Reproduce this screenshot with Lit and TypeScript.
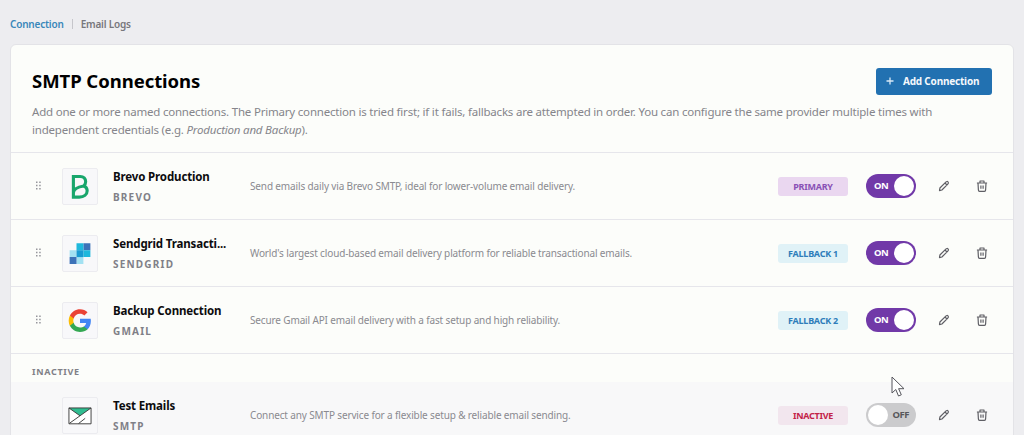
import { LitElement, css, html, svg } from 'lit';
import { customElement, property } from 'lit/decorators.js';
import { classMap } from 'lit/directives/class-map.js';

interface Connection {
  name: string;
  provider: string;
  description: string;
  status: string;
  tone: string;
  active: boolean;
}

const connections: Connection[] = [
  {
    name: 'Brevo Production',
    provider: 'brevo',
    description: 'Send emails daily via Brevo SMTP, ideal for lower-volume email delivery.',
    status: 'Primary',
    tone: 'primary',
    active: true,
  },
  {
    name: 'Sendgrid Transacti...',
    provider: 'sendgrid',
    description: "World's largest cloud-based email delivery platform for reliable transactional emails.",
    status: 'Fallback 1',
    tone: 'fallback',
    active: true,
  },
  {
    name: 'Backup Connection',
    provider: 'gmail',
    description: 'Secure Gmail API email delivery with a fast setup and high reliability.',
    status: 'Fallback 2',
    tone: 'fallback',
    active: true,
  },
  {
    name: 'Test Emails',
    provider: 'smtp',
    description: 'Connect any SMTP service for a flexible setup & reliable email sending.',
    status: 'Inactive',
    tone: 'inactive',
    active: false,
  },
];

// all logos share a 36x36 view box
const logos: Record<string, unknown> = {
  brevo: svg`
    <path d="M11 7.400v21.800h6.200c5 0 8.400-2.700 8.400-6.600 0-2.700-1.400-4.500-3.700-5.200 1.400-1 2.100-2.500 2.100-4.300 0-3.400-2.300-5.700-5.700-5.700z
      M11 24.500c.3-3.800 4.300-6 10.900-7.100" fill="none" stroke="#18a66c" stroke-width="3.300" />`,
  sendgrid: svg`
    <path fill="#a3e1f2" d="M7 14.500h7.300v7.300H7zM14.300 21.800h7.300v7.300h-7.300z" />
    <path fill="#3c72b8" d="M7 21.800h7.300v7.300H7zM21.600 7.200H29v7.300h-7.400z" />
    <path fill="#1fb8dc" d="M14.300 7.200h7.300v7.300h-7.300zM21.600 14.500H29v7.300h-7.400z" />
    <path fill="#199bd2" d="M14.300 14.500h7.300v7.300h-7.300z" />`,
  gmail: svg`
    <g transform="translate(6 6.200)">
      <path fill="#4285f4" d="M23.500 12.300c0-.8-.1-1.600-.2-2.300H12v4.500h6.500c-.3 1.500-1.100 2.700-2.400 3.600v3h3.900c2.200-2.100 3.500-5.200 3.500-8.800z" />
      <path fill="#34a853" d="M12 24c3.200 0 6-1.100 8-2.900l-3.900-3c-1.100.7-2.500 1.200-4.100 1.200-3.100 0-5.800-2.100-6.700-5H1.300v3.100C3.300 21.300 7.300 24 12 24z" />
      <path fill="#fbbc05" d="M5.300 14.300c-.3-.7-.4-1.500-.4-2.300s.1-1.600.4-2.300V6.600h-4C.5 8.200 0 10 0 12s.5 3.800 1.300 5.400z" />
      <path fill="#ea4335" d="M12 4.700c1.800 0 3.300.6 4.600 1.800L20 3.100C18 1.200 15.200 0 12 0 7.300 0 3.300 2.700 1.300 6.600l4 3.100c.9-2.900 3.600-5 6.700-5z" />
    </g>`,
  smtp: svg`
    <path fill="#fff" d="M6.300 10h23.400v16.800H6.300z" />
    <path fill="#2fbd90" d="M6.300 10h23.400L18 18.300z" />
    <path fill="none" stroke="#3c3c3c" d="M6.300 10h23.400v16.800H6.300zM6.300 10 18 18.300 29.700 10M6.800 26.300 18 18.300M16.500 26.500l7-5.500" />`,
};

const pencil = svg`
  <path d="M1.500 10.600 1.900 8 7.800 2.100c.8-.8 1.600-.8 2.200-.2s.6 1.400-.2 2.200L3.900 10zM7 3l2 2" />
`;

const trash = svg`
  <path d="M.9 3h10.200M4 3V1h4v2M2 3l.4 7c0 .7.5 1.300 1.200 1.300h4.800c.7 0 1.200-.6 1.200-1.300L10 3M4.900 5.500v3.200M7.100 5.500v3.200" />
`;

@customElement('state-switch')
export class StateSwitch extends LitElement {
  @property({ type: Boolean }) on = false;

  static styles = css`
    :host {
      display: block;
    }
    .track {
      display: flex;
      align-items: center;
      justify-content: space-between;
      box-sizing: border-box;
      width: 50px;
      height: 24px;
      padding: 2px 2px 2px 8px;
      border-radius: 12px;
      background: #7139a8;
      color: #fff;
      font: 700 9.5px 'Noto Sans', sans-serif;
      letter-spacing: -0.5px;
    }
    .track.off {
      flex-direction: row-reverse;
      padding: 2px 7px 2px 2px;
      background: #cbcbcd;
      color: #57575b;
    }
    .label {
      padding-bottom: 1px;
    }
    .knob {
      width: 20px;
      height: 20px;
      border-radius: 50%;
      background: #fff;
    }
  `;

  render() {
    return html`
      <div class=${classMap({ track: true, off: !this.on })}>
        <span class="label">${this.on ? 'ON' : 'OFF'}</span>
        <span class="knob"></span>
      </div>
    `;
  }
}

@customElement('connection-row')
export class ConnectionRow extends LitElement {
  @property({ attribute: false }) connection!: Connection;

  static styles = css`
    :host {
      display: block;
    }
    .row {
      display: grid;
      grid-template-columns: 28px 51px 137px 1fr 88px 72px 38px 12px;
      align-items: center;
      box-sizing: border-box;
      height: 66px;
      padding: 0 25px 0 23px;
    }
    .inactive {
      background: #f8f8f9;
    }
    .handle {
      width: 8px;
      height: 12px;
      fill: #96969c;
    }
    .logo {
      box-sizing: border-box;
      width: 36px;
      height: 37px;
      border: 1px solid #ececf0;
      border-radius: 2px;
      background: #f8f8fa;
    }
    .logo svg {
      display: block;
      width: 34px;
      height: 35px;
    }
    .names {
      width: 122px;
      padding-top: 1px;
    }
    .name {
      color: #0c0c0e;
      font-size: 11.5px;
      font-weight: 700;
      line-height: 18px;
      letter-spacing: -0.14px;
      white-space: nowrap;
    }
    .provider {
      margin-top: 2px;
      color: #808087;
      font-size: 10px;
      font-weight: 700;
      line-height: 18px;
      letter-spacing: 1.2px;
      text-transform: uppercase;
    }
    .description {
      color: #8a8a90;
      font-size: 10px;
      letter-spacing: -0.14px;
      white-space: nowrap;
    }
    .badge {
      width: 70px;
      border-radius: 3px;
      font-size: 9px;
      font-weight: 700;
      line-height: 19px;
      letter-spacing: -0.25px;
      text-align: center;
      text-transform: uppercase;
    }
    .badge.primary {
      background: #ead7f0;
      color: #8951b5;
    }
    .badge.fallback {
      background: #e0f2f7;
      color: #2e7dba;
    }
    .badge.off {
      background: #f2e6ee;
      color: #c32348;
    }
    .icon {
      width: 12px;
      height: 12px;
      fill: none;
      stroke: #5f5f65;
      stroke-width: 1.2;
      stroke-linejoin: round;
    }
  `;

  render() {
    const { name, provider, description, status, tone, active } = this.connection;
    return html`
      <div class=${classMap({ row: true, inactive: !active })}>
        ${active
          ? html`<svg class="handle" viewBox="0 0 8 12">
              ${[1.5, 4.7, 7.9].map(y => svg`<path d="M2 ${y}h1.500v1.500H2zM5.200 ${y}h1.500v1.500H5.200z" />`)}
            </svg>`
          : html`<span></span>`}
        <div class="logo"><svg viewBox="0 0 36 36">${logos[provider]}</svg></div>
        <div class="names">
          <div class="name">${name}</div>
          <div class="provider">${provider}</div>
        </div>
        <div class="description">${description}</div>
        <div class="badge ${active ? tone : 'off'}">${status}</div>
        <state-switch ?on=${active}></state-switch>
        <svg class="icon" viewBox="0 0 12 12">${pencil}</svg>
        <svg class="icon" viewBox="0 0 12 12">${trash}</svg>
      </div>
    `;
  }
}

@customElement('app-root')
export class AppRoot extends LitElement {
  static styles = css`
    :host {
      display: block;
      position: relative;
      box-sizing: border-box;
      height: 435px;
      padding: 16px 10px 0;
      overflow: hidden;
      background: #ededf0;
      font-family: 'Noto Sans', 'Segoe UI', sans-serif;
    }
    .tabs {
      display: flex;
      align-items: center;
      gap: 8px;
      height: 16px;
      color: #77777c;
      font-size: 10px;
      font-weight: 600;
      letter-spacing: -0.2px;
    }
    .tabs .current {
      color: #3987ba;
    }
    .tabs .divider {
      width: 1px;
      height: 10px;
      background: #c6c6cb;
    }
    .card {
      margin-top: 12px;
      border: 1px solid #e3e3e7;
      border-radius: 6px;
      background: #fcfdfa;
    }
    .head {
      padding: 22px 21px 14px;
    }
    .title-bar {
      display: flex;
      align-items: center;
      justify-content: space-between;
      height: 28px;
    }
    h1 {
      margin: 0;
      font-size: 18.5px;
      font-weight: 700;
      letter-spacing: -0.05px;
      line-height: 28px;
    }
    .add {
      display: flex;
      align-items: center;
      gap: 9px;
      width: 116px;
      height: 27px;
      padding: 0 0 0 10px;
      border: 0;
      border-radius: 3px;
      background: #2271b1;
      color: #f4f8fc;
      font-family: inherit;
      font-size: 10px;
      font-weight: 700;
      letter-spacing: -0.2px;
      white-space: nowrap;
    }
    .add svg {
      width: 8px;
      height: 8px;
      stroke: #d9e9f6;
      stroke-width: 1.3;
    }
    .intro {
      margin: 8px 0 0;
      color: #85858b;
      font-size: 11.5px;
      line-height: 17.5px;
      letter-spacing: -0.2px;
      white-space: nowrap;
    }
    connection-row {
      border-top: 1px solid #e6e6eb;
    }
    .group {
      height: 28px;
      padding-left: 21px;
      border-top: 1px solid #e6e6eb;
      color: #808087;
      font-size: 9px;
      font-weight: 700;
      line-height: 35px;
      letter-spacing: 0.7px;
    }
    .group + connection-row {
      border-top: 0;
    }
    .pointer {
      position: absolute;
      left: 891px;
      top: 376px;
      width: 14px;
      height: 21px;
    }
  `;

  render() {
    return html`
      <nav class="tabs">
        <span class="current">Connection</span>
        <span class="divider"></span>
        <span>Email Logs</span>
      </nav>
      <section class="card">
        <header class="head">
          <div class="title-bar">
            <h1>SMTP Connections</h1>
            <button class="add">
              <svg viewBox="0 0 8 8"><path d="M4 0.500v7M0.500 4h7" /></svg>
              Add Connection
            </button>
          </div>
          <p class="intro">
            Add one or more named connections. The Primary connection is tried first; if it fails, fallbacks are attempted in order. You can configure the same provider multiple times with<br />
            independent credentials (e.g. <em>Production and Backup</em>).
          </p>
        </header>
        ${connections.filter(c => c.active).map(c => html`<connection-row .connection=${c}></connection-row>`)}
        <div class="group">INACTIVE</div>
        ${connections.filter(c => !c.active).map(c => html`<connection-row .connection=${c}></connection-row>`)}
      </section>
      <svg class="pointer" viewBox="0 0 14 21">
        <path d="M1 1v16l3.800-3.500L7.500 20l2.800-1.200-2.700-6.100H13z" fill="#fff" stroke="#55555c" />
      </svg>
    `;
  }
}
